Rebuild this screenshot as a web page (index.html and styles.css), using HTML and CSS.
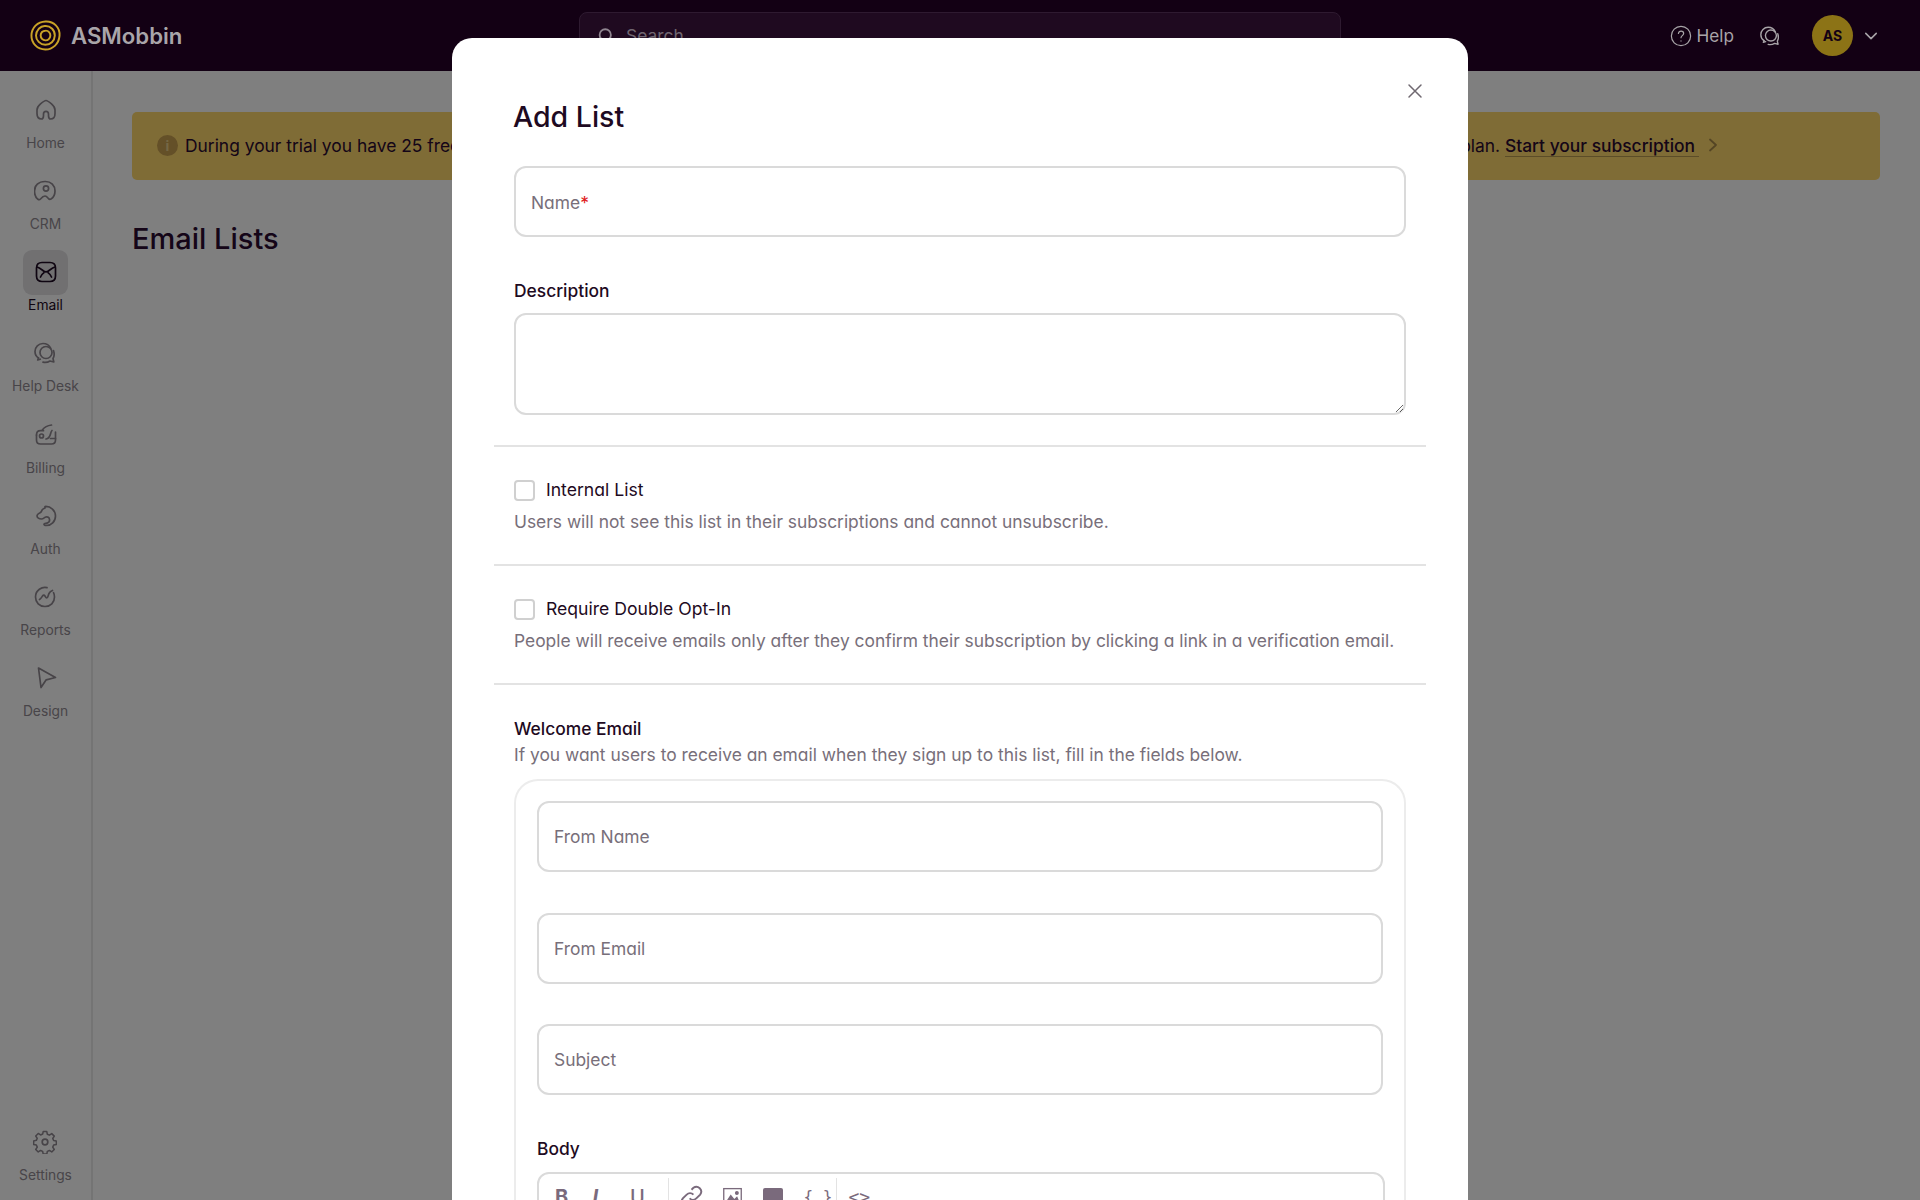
FILE: index.html
```html
<!DOCTYPE html>
<html lang="en">
<head>
    <meta charset="UTF-8">
    <title>Email Lists - ASMobbin</title>
    <link rel="stylesheet" href="styles.css">
</head>
<body>
    <div class="header">
        <div class="brand">
            <svg class="logo" viewBox="0 0 32 32" fill="none" stroke="#c9a227" stroke-width="2">
                <path d="M16 1.500c4.500-.3 8 1.300 10.700 4 2.900 2.900 4.100 6.500 3.800 10.700-.3 4.100-1.800 7.500-4.600 10.200-2.800 2.600-6.100 4.200-10.100 4.100-4-.1-7.500-1.500-10.200-4.300C2.800 23.400 1.400 19.900 1.500 16c.1-4 1.500-7.500 4.200-10.200C8.500 3.100 12 1.700 16 1.500z"/>
                <path d="M16 6.200c2.900-.1 5 1 6.900 2.800 1.900 2 2.800 4.300 2.700 7.100-.1 2.700-1 4.900-3 6.800-2 1.900-4.100 2.700-6.800 2.700-2.700-.1-4.900-1-6.800-3-1.900-1.900-2.800-4-2.800-6.600 0-2.700 1-4.900 2.800-6.900 2-1.900 4.200-2.800 6-2.900z"/>
                <path d="M16 11c1.500-.1 2.800.5 3.700 1.500 1 1 1.400 2.200 1.300 3.700-.1 1.400-.6 2.600-1.600 3.500-1 1-2.100 1.400-3.500 1.300-1.400-.1-2.600-.6-3.500-1.600-.9-1-1.400-2.100-1.400-3.400 0-1.400.5-2.600 1.400-3.600.9-.9 2.100-1.400 3.600-1.400z"/>
            </svg>
            <span class="brand-name">ASMobbin</span>
        </div>
        <div class="search">
            <svg class="search-icon" viewBox="0 0 24 24" fill="none" stroke="#8f8590" stroke-width="2.400" stroke-linecap="round">
                <circle cx="11" cy="10.500" r="7.500"/>
                <path d="M16.500 16.500l4 4"/>
            </svg>
            <span>Search</span>
        </div>
        <div class="header-right">
            <div class="help">
                <svg viewBox="0 0 24 24" fill="none" stroke="#a8a4a8" stroke-width="1.300" stroke-linecap="round">
                    <circle cx="12" cy="12" r="10.500"/>
                    <path d="M9.200 9.300c.2-1.600 1.400-2.600 2.900-2.600 1.600 0 2.800 1 2.800 2.500 0 2.300-2.900 2.500-2.900 4.700"/>
                    <path d="M12 17.300v.2"/>
                </svg>
                <span>Help</span>
            </div>
            <svg class="chat-icon" viewBox="0 0 24 24" fill="none" stroke="#a8a4a8" stroke-width="1.500" stroke-linecap="round" stroke-linejoin="round">
                <path d="M5.500 17C3.200 15.500 2 13.200 2 10.500 2 6 5.500 2.500 10 2.500c3.400 0 6.300 1.800 7.800 4.800"/>
                <path d="M5.500 17l-.8 2 2.600-.8"/>
                <circle cx="13" cy="11.500" r="6"/>
                <path d="M20.500 9.500c1 3 .7 6-.5 8l.8 3.500-3.800-1c-2 1.300-4.500 1.800-7 1.200"/>
            </svg>
            <div class="avatar">AS</div>
            <svg class="caret" viewBox="0 0 16 16" fill="none" stroke="#a8a4a8" stroke-width="1.800" stroke-linecap="round" stroke-linejoin="round">
                <path d="M2 5l6 6 6-6"/>
            </svg>
        </div>
    </div>

    <div class="shell">
        <div class="sidebar">
            <div class="nav-item">
                <div class="nav-icon">
                    <svg viewBox="0 0 24 24"><path d="M12 2.500c1.500 0 3.500 1.700 5.500 3.400 2.300 2 3.500 3.500 3.500 6.100v3.500c0 3.600-2 5.500-4.300 5.500-1.600 0-2.200-1-2.200-3.300v-1.700c0-1.700-1-2.700-2.500-2.700s-2.500 1-2.500 2.700v1.700c0 2.300-.6 3.300-2.200 3.300C5 21 3 19.100 3 15.500V12c0-2.600 1.200-4.100 3.500-6.100 2-1.700 4-3.400 5.500-3.400z"/></svg>
                </div>
                <span>Home</span>
            </div>
            <div class="nav-item">
                <div class="nav-icon">
                    <svg viewBox="0 0 24 24"><path d="M12 2.500c5.500 0 9.500 4 9.500 9.500 0 3.700-1.500 6.500-4 8-1 .6-2 .2-2.700-.6-1-1.200-1.800-2.400-3.300-2.400-2 0-3.500 1.800-4.500 3-.7.800-1.800.8-2.600.2-2-1.500-3.400-4.700-3.400-8.200 0-5.500 4-9.500 10.500-9.500z" transform="translate(-.5 0)"/><circle cx="12" cy="9.500" r="2.600"/></svg>
                </div>
                <span>CRM</span>
            </div>
            <div class="nav-item active">
                <div class="nav-icon">
                    <svg viewBox="0 0 24 24"><path d="M8 2.500h8c3.600 0 5.500 1.900 5.500 5.500v8c0 3.600-1.900 5.500-5.500 5.500H8c-3.600 0-5.500-1.900-5.500-5.500V8c0-3.600 1.900-5.500 5.500-5.500z"/><path d="M3 7c2.500.5 4.500 2.500 6.500 4 1.500 1.100 3.500 1.100 5 0 2-1.500 4-3.500 6.500-4"/><path d="M6.500 17c.8-1.800 2.200-3.300 3.500-4.300M17.500 17c-.8-1.800-2.200-3.300-3.500-4.300"/></svg>
                </div>
                <span>Email</span>
            </div>
            <div class="nav-item">
                <div class="nav-icon">
                    <svg viewBox="0 0 24 24"><path d="M5.500 17C3.200 15.500 2 13.200 2 10.500 2 6 5.500 2.500 10 2.500c3.400 0 6.300 1.800 7.800 4.800"/><path d="M5.500 17l-.8 2 2.600-.8"/><circle cx="13" cy="11.500" r="6"/><path d="M20.500 9.500c1 3 .7 6-.5 8l.8 3.500-3.800-1c-2 1.300-4.500 1.800-7 1.200"/></svg>
                </div>
                <span>Help Desk</span>
            </div>
            <div class="nav-item">
                <div class="nav-icon">
                    <svg viewBox="0 0 24 24"><path d="M2.500 12c0-2.700 1.500-4.300 4-4.300h3"/><path d="M8.500 6.700C10.500 4 14 2.500 17.500 2"/><path d="M21.500 9v8c0 2.700-1.600 4-4 4H6.500c-2.500 0-4-1.300-4-4v-5"/><circle cx="7.500" cy="13" r="2"/><path d="M12 16c3-.5 4-3 4.500-5 .3-1.200 1-3 1.500-3.500"/><path d="M16.500 15.500h5"/></svg>
                </div>
                <span>Billing</span>
            </div>
            <div class="nav-item">
                <div class="nav-icon">
                    <svg viewBox="0 0 24 24"><path d="M11 2.500c5.800-.4 10.500 4 10.500 9.500s-4.300 9.800-9.500 9.500c-1.200 0-2.200-.6-2-1.400.2-.8 1.800-.6 3-1 1.900-.6 2.800-2.200 2.500-3.800-.3-1.900-1.800-2.800-3.600-2.300-1.500.4-2.500 2-4.400 2-2.500 0-4.500-1.300-4.500-3.300 0-1.700 1.600-2.300 3-3 1.700-.9 1.500-2.200 2.500-3.200.7-.7 1.500-1 2.500-1.500z"/></svg>
                </div>
                <span>Auth</span>
            </div>
            <div class="nav-item">
                <div class="nav-icon">
                    <svg viewBox="0 0 24 24"><path d="M14 2.700C9 1.500 2.500 5 2.500 12c0 5.500 4 9.500 9.500 9.500s9.500-4 9.500-9.500c0-1.500-.3-3-1-4.300"/><path d="M6.500 14.500c1.200-.7 2-2 3-3.500.8-1.200 1.800-1.200 2.500 0 .5.800.7 2 1.700 2 1.300 0 1.300-2.500 2.300-4.500.7-1.300 2.200-2.500 3.500-3"/></svg>
                </div>
                <span>Reports</span>
            </div>
            <div class="nav-item">
                <div class="nav-icon">
                    <svg viewBox="0 0 24 24"><path d="M4.500 2l17 9.500-9.300 2.300-5.200 7.700z"/></svg>
                </div>
                <span>Design</span>
            </div>
            <div class="nav-item nav-bottom">
                <div class="nav-icon">
                    <svg viewBox="0 0 24 24"><path d="M10 1.500h4l.6 3 2.300 1 2.600-1.700 2.800 2.800-1.700 2.600 1 2.300 3 .6v3.800l-3 .6-1 2.300 1.700 2.600-2.800 2.800-2.600-1.700-2.300 1-.6 3h-4l-.6-3-2.300-1-2.600 1.700-2.800-2.800 1.700-2.600-1-2.300-3-.6V11.900l3-.6 1-2.300-1.700-2.600 2.800-2.800 2.600 1.700 2.300-1z" transform="translate(1.200 .2) scale(.9)"/><circle cx="12" cy="12" r="2.800"/></svg>
                </div>
                <span>Settings</span>
            </div>
        </div>

        <div class="content">
            <div class="banner">
                <span class="banner-info">i</span>
                <span class="banner-start">During your trial you have 25 free emails a day. To remove this limit,</span>
                <span class="banner-end">upgrade to a paid plan. <a class="banner-link">Start your subscription</a></span>
                <svg class="banner-arrow" viewBox="0 0 12 16" fill="none" stroke="#a88a48" stroke-width="1.800" stroke-linecap="round" stroke-linejoin="round">
                    <path d="M3 2.500L9 8l-6 5.500"/>
                </svg>
            </div>
            <h1 class="page-title">Email Lists</h1>
        </div>

        <div class="backdrop"></div>
    </div>

    <div class="modal">
        <svg class="modal-close" viewBox="0 0 16 16" fill="none" stroke="#6f6870" stroke-width="1.500" stroke-linecap="round">
            <path d="M2 2l12 12M14 2L2 14"/>
        </svg>
        <h2 class="modal-title">Add List</h2>

        <div class="name-field">
            <input class="text-input" type="text">
            <span class="floating-label">Name<em>*</em></span>
        </div>

        <label class="field-label">Description</label>
        <textarea class="text-area"></textarea>

        <div class="divider"></div>

        <div class="check-row">
            <span class="check-box"></span>
            <span>Internal List</span>
        </div>
        <p class="help-text">Users will not see this list in their subscriptions and cannot unsubscribe.</p>

        <div class="divider"></div>

        <div class="check-row">
            <span class="check-box"></span>
            <span>Require Double Opt-In</span>
        </div>
        <p class="help-text">People will receive emails only after they confirm their subscription by clicking a link in a verification email.</p>

        <div class="divider"></div>

        <div class="welcome-title">Welcome Email</div>
        <p class="welcome-help">If you want users to receive an email when they sign up to this list, fill in the fields below.</p>

        <div class="welcome-card">
            <input class="text-input" type="text" placeholder="From Name">
            <input class="text-input" type="text" placeholder="From Email">
            <input class="text-input" type="text" placeholder="Subject">

            <label class="field-label body-label">Body</label>
            <div class="editor">
                <div class="toolbar">
                    <span class="tool tool-bold">B</span>
                    <span class="tool tool-italic">I</span>
                    <span class="tool tool-under">U</span>
                    <span class="tool-sep"></span>
                    <svg class="tool-icon tool-link" viewBox="0 0 24 24" fill="none" stroke="#7a6a7c" stroke-width="2">
                        <path d="M10 14a5 5 0 0 0 7 0l4-4a5 5 0 0 0-7-7l-2 2"/>
                        <path d="M14 10a5 5 0 0 0-7 0l-4 4a5 5 0 0 0 7 7l2-2"/>
                    </svg>
                    <svg class="tool-icon" viewBox="0 0 24 24" fill="#7a6a7c" stroke="#7a6a7c" stroke-width="1.500">
                        <rect x="2" y="3" width="20" height="19" fill="none"/>
                        <path d="M4 20l6-9 4 5 3-3 3 7z"/>
                        <circle cx="17" cy="8" r="1.500"/>
                    </svg>
                    <span class="tool-block"></span>
                    <span class="tool tool-braces">{ }</span>
                    <span class="tool-sep"></span>
                    <span class="tool tool-code">&lt;&gt;</span>
                </div>
            </div>
        </div>
    </div>
</body>
</html>
```

FILE: styles.css
```css
* {
    margin: 0;
    padding: 0;
    box-sizing: border-box;
}

html, body {
    height: 100%;
    overflow: hidden;
}

body {
    font-family: 'Inter', 'Liberation Sans', sans-serif;
    background: #fff;
    color: #2a0a30;
}

/* top bar */
.header {
    position: relative;
    z-index: 2;
    height: 71px;
    background: #130014;
    display: flex;
    align-items: center;
    padding: 0 42px 0 30px;
}

.brand {
    display: flex;
    align-items: center;
    gap: 10px;
    width: 549px;
}

.logo {
    width: 31px;
    height: 31px;
}

.brand-name {
    font-size: 22.2px;
    font-weight: 600;
    color: #a9a5a9;
}

.search {
    width: 762px;
    height: 48px;
    border: 1px solid #2e1a30;
    border-radius: 8px;
    background: #1f0a20;
    display: flex;
    align-items: center;
    gap: 11px;
    padding: 0 17px;
    color: #6f6570;
    font-size: 17.4px;
}

.search-icon {
    width: 18px;
    height: 18px;
}

.header-right {
    margin-left: auto;
    display: flex;
    align-items: center;
}

.help {
    display: flex;
    align-items: center;
    gap: 5px;
    font-size: 17.2px;
    color: #a8a4a8;
}

.help svg {
    width: 22px;
    height: 22px;
}

.chat-icon {
    width: 22px;
    height: 22px;
    margin-left: 25px;
}

.avatar {
    width: 41px;
    height: 41px;
    margin-left: 31px;
    border-radius: 50%;
    background: #8c7316;
    color: #130014;
    font-size: 14px;
    font-weight: 700;
    display: flex;
    align-items: center;
    justify-content: center;
}

.caret {
    width: 14px;
    height: 14px;
    margin-left: 11px;
}

/* page under the modal */
.shell {
    position: relative;
    height: 1129px;
    display: flex;
}

.backdrop {
    position: absolute;
    inset: 0;
    background: rgba(0, 0, 0, 0.5);
}

.sidebar {
    width: 93px;
    flex-shrink: 0;
    border-right: 2px solid #e8e8e8;
    display: flex;
    flex-direction: column;
    align-items: center;
    padding-top: 16px;
    padding-bottom: 16px;
}

.nav-item {
    height: 81.25px;
    display: flex;
    flex-direction: column;
    align-items: center;
    color: #918a92;
    font-size: 13.8px;
    line-height: 18px;
}

.nav-icon {
    width: 45px;
    height: 45px;
    border-radius: 9px;
    display: flex;
    align-items: center;
    justify-content: center;
    margin-bottom: 1.5px;
}

.nav-icon svg {
    width: 24px;
    height: 24px;
    fill: none;
    stroke: #8f8890;
    stroke-width: 1.700;
    stroke-linecap: round;
    stroke-linejoin: round;
}

.nav-item.active {
    color: #1e0a22;
}

.nav-item.active .nav-icon {
    background: #e2e0e3;
}

.nav-item.active .nav-icon svg {
    stroke: #1e0a22;
}

.nav-bottom {
    margin-top: auto;
    height: auto;
}

.content {
    flex: 1;
    min-width: 0;
    padding: 41px 40px 0 39px;
}

.banner {
    height: 68px;
    background: #ffd86c;
    border-radius: 5px;
    display: flex;
    align-items: center;
    padding: 0 161px 2px 25px;
    font-size: 17.4px;
    white-space: nowrap;
}

.banner-info {
    width: 21px;
    height: 21px;
    border-radius: 50%;
    background: #c8a050;
    color: #e8cf8a;
    font-size: 14px;
    font-weight: 700;
    text-align: center;
    line-height: 21px;
    margin-right: 7px;
}

.banner-end {
    margin-left: auto;
}

.banner-link {
    font-weight: 500;
    padding-right: 4px;
    border-bottom: 1px solid #b89a50;
}

.banner-arrow {
    width: 12px;
    height: 16px;
    margin-left: 8px;
}

.page-title {
    margin-top: 39px;
    font-size: 29px;
    font-weight: 500;
    line-height: 40px;
}

/* modal */
.modal {
    position: absolute;
    z-index: 3;
    top: 38px;
    left: 452px;
    width: 1016px;
    height: 1200px;
    background: #fff;
    border-radius: 20px;
    padding: 0 62px;
    font-feature-settings: 'cv11';
}

.modal-close {
    position: absolute;
    top: 45px;
    right: 45px;
    width: 16px;
    height: 16px;
}

.modal-title {
    padding-top: 60px;
    margin-left: -1px;
    font-size: 28.5px;
    font-weight: 500;
    line-height: 38px;
    margin-bottom: 30px;
    color: #1e0a22;
}

.name-field {
    position: relative;
}

.floating-label {
    position: absolute;
    left: 17px;
    top: 25px;
    font-size: 17.4px;
    line-height: 24px;
    color: #786f7a;
}

.floating-label em {
    color: #e01b1b;
    font-style: normal;
}

.text-input {
    display: block;
    flex-shrink: 0;
    width: 100%;
    height: 71px;
    border: 2px solid #dadada;
    border-radius: 12px;
    padding: 0 15px;
    font-family: inherit;
    font-size: 17.4px;
    font-feature-settings: 'cv11';
    color: #2a0a30;
    background: #fff;
    outline: none;
}

.text-input::placeholder {
    color: #786f7a;
    opacity: 1;
}

.field-label {
    display: block;
    font-size: 17.4px;
    font-weight: 500;
    line-height: 24px;
    color: #1e0a22;
}

.name-field + .field-label {
    margin-top: 42px;
    margin-bottom: 10px;
}

.text-area {
    display: block;
    width: 100%;
    height: 102px;
    border: 2px solid #dadada;
    border-radius: 12px;
    background: #fff;
    outline: none;
    resize: vertical;
}

.divider {
    height: 2px;
    margin: 30px -20px 0;
    background: #e3e3e3;
}

.check-row {
    display: flex;
    align-items: center;
    gap: 11px;
    margin-top: 31px;
    font-size: 17.6px;
    line-height: 24px;
    color: #1e0a22;
}

.check-box {
    width: 21px;
    height: 21px;
    border: 2px solid #d0d0d0;
    border-radius: 4px;
}

.help-text {
    margin-top: 8px;
    font-size: 17.4px;
    line-height: 24px;
    color: #786f7a;
    white-space: nowrap;
}

.welcome-title {
    margin-top: 32px;
    font-size: 17.4px;
    font-weight: 500;
    line-height: 24px;
    color: #1e0a22;
}

.welcome-help {
    margin-top: 2px;
    font-size: 17.4px;
    line-height: 24px;
    color: #786f7a;
}

.welcome-card {
    margin-top: 12px;
    height: 500px;
    border: 2px solid #ececec;
    border-bottom: none;
    border-radius: 24px 24px 0 0;
    padding: 20px 21px 0;
    display: flex;
    flex-direction: column;
    gap: 40.5px;
}

.body-label {
    margin-bottom: -29.5px;
    padding-top: 1px;
}

.editor {
    flex-shrink: 0;
    border: 2px solid #dadada;
    border-radius: 12px 12px 0 0;
    height: 120px;
    margin-right: -2px;
}

.toolbar {
    display: flex;
    align-items: center;
    height: 46px;
    padding: 0 10px 0 16px;
    color: #7a6a7c;
    font-size: 20px;
}

.tool-bold {
    font-weight: 700;
    width: 37.5px;
}

.tool-italic {
    font-style: italic;
    font-weight: 700;
    width: 37.5px;
}

.tool-under {
    font-weight: 500;
    width: 37.5px;
}

.tool-braces {
    font-size: 16px;
    width: 32px;
    font-family: 'DejaVu Sans Mono', monospace;
}

.tool-code {
    font-size: 18px;
    font-family: 'DejaVu Sans Mono', monospace;
}

.tool-sep {
    width: 1px;
    height: 38px;
    flex-shrink: 0;
    background: #e3e3e3;
    margin-right: 12px;
}

.tool-icon {
    width: 21px;
    height: 21px;
    margin-right: 20px;
}

.tool-link {
    transform: rotate(0deg) scale(1.1);
}

.tool-block {
    width: 20px;
    height: 18px;
    background: #7a6a7c;
    border-radius: 2px;
    margin-right: 21px;
}
```
